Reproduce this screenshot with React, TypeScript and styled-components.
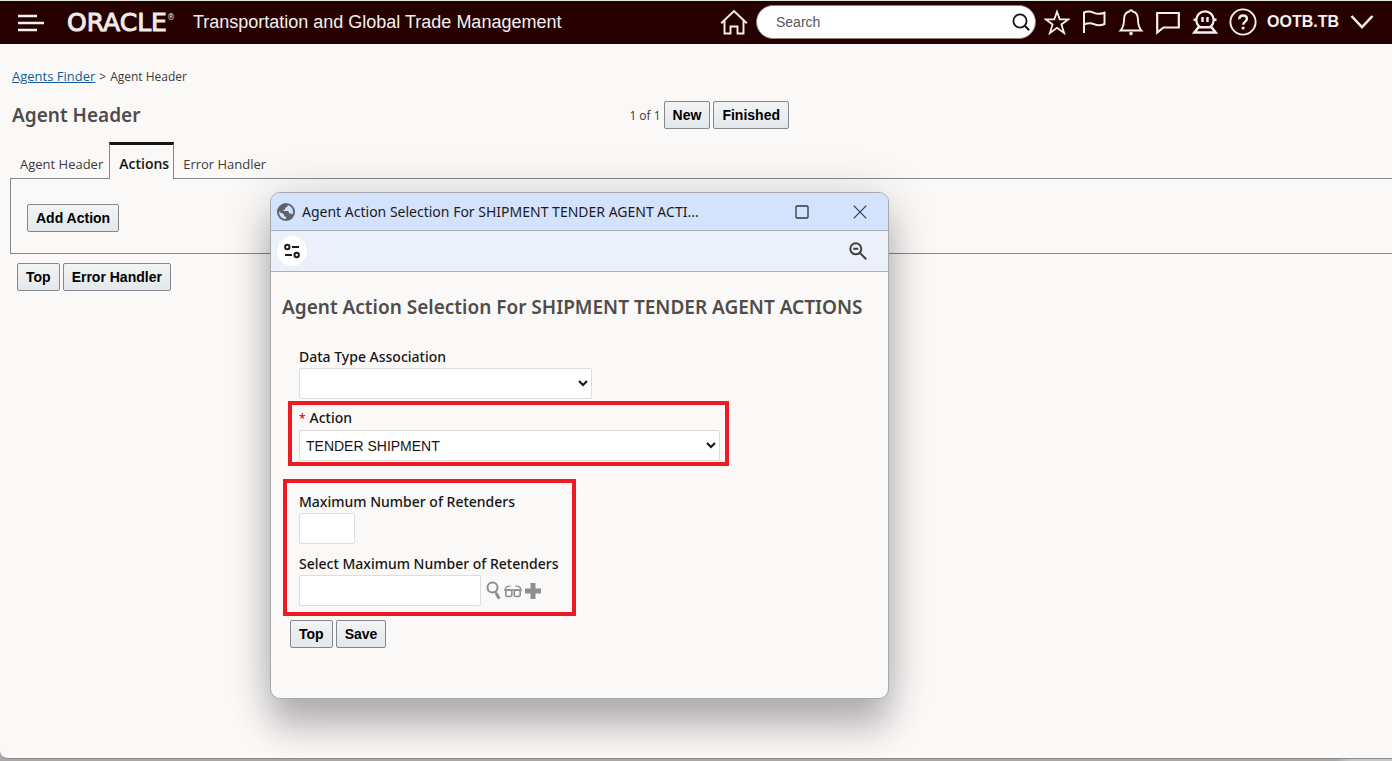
import React from "react";
import styled, { createGlobalStyle, css } from "styled-components";

const UI_FONT = `"Segoe UI", "Open Sans", "Noto Sans", sans-serif`;
const LABEL_FONT = `"Segoe UI", "Noto Sans", "Open Sans", sans-serif`;
const CONTROL_FONT = `Arial, "Liberation Sans", sans-serif`;

const GlobalStyle = createGlobalStyle`
  *, *::before, *::after { box-sizing: border-box; }
  body {
    margin: 0;
    background: #fbf9f8;
    color: #161513;
    font-family: ${UI_FONT};
    font-size: 13px;
  }
  h1, h2, p { margin: 0; }
`;

const Page = styled.div`
  position: relative;
  display: flex;
  flex-direction: column;
  min-height: 100vh;
  overflow: hidden;
  background: linear-gradient(to right, #a9a8a7 96%, #c8c7c7 97%);
`;

const Screen = styled.div`
  flex: 1;
  display: flex;
  flex-direction: column;
  margin-bottom: 2px;
  border-bottom: 1px solid #8f8e8d;
  border-bottom-left-radius: 8px;
  background: #fbf9f8;
  overflow: hidden;
`;

/* ---------- top bar ---------- */

const TopBar = styled.header`
  display: flex;
  align-items: center;
  justify-content: space-between;
  height: 44px;
  padding: 0 18px;
  border-top: 1px solid #dfe6da;
  background: #260000;
  color: #f5f1ee;
  font-family: ${CONTROL_FONT};
`;

const Brand = styled.div`
  display: flex;
  align-items: center;
`;

const Actions = styled.div`
  display: flex;
  align-items: center;
  gap: 8px;
  padding-bottom: 2px;
`;

const IconButton = styled.button`
  display: flex;
  align-items: center;
  justify-content: center;
  padding: 0;
  border: 0;
  background: none;
  color: inherit;
  cursor: pointer;
`;

const Logo = styled.span`
  display: flex;
  margin-left: 23px;
  color: #f0ebe8;
  font-family: "DejaVu Sans", sans-serif;
  font-size: 25px;
  line-height: 30px;
  -webkit-text-stroke: 1px currentColor;

  sup {
    font-size: 8px;
    line-height: 20px;
    -webkit-text-stroke: 0;
  }
`;

const AppName = styled.span`
  margin-left: 18px;
  font-size: 18px;
  white-space: nowrap;
`;

const SearchBox = styled.label`
  display: flex;
  align-items: center;
  width: 280px;
  height: 34px;
  padding: 0 5px 0 19px;
  border: 1px solid #8d8583;
  border-radius: 17px;
  background: #fff;
  color: #161513;
`;

const SearchInput = styled.input`
  flex: 1;
  min-width: 0;
  padding: 0;
  border: 0;
  outline: 0;
  background: none;
  font: 14px ${CONTROL_FONT};

  &::placeholder { color: #5a5654; opacity: 1; }
`;

const UserButton = styled(IconButton)`
  gap: 11px;
  font: bold 16px ${CONTROL_FONT};
`;

/* ---------- shared controls ---------- */

const Button = styled.button`
  height: 28px;
  padding: 0 8px;
  border: 1px solid #85888a;
  border-radius: 2px;
  background: linear-gradient(#f2f4f5, #e3e8ec);
  color: #000;
  font: bold 14px ${CONTROL_FONT};
  white-space: nowrap;
  cursor: pointer;
`;

const ButtonRow = styled.div<{ $inset: number; $top: number }>`
  display: flex;
  gap: 3px;
  padding: ${(p) => p.$top}px ${(p) => p.$inset}px 0;
`;

/* ---------- main page ---------- */

const Breadcrumb = styled.nav`
  display: flex;
  align-items: center;
  gap: 4px;
  height: 20px;
  margin: 22px 12px 0;
  font-size: 12px;
  color: #3b3937;

  a { color: #0f5c99; font-size: 13px; }
`;

const TitleRow = styled.div`
  display: grid;
  grid-template-columns: 45% auto;
  align-items: center;
  margin-top: 15px;
  padding: 0 8px 0 12px;
`;

const PageTitle = styled.h1`
  font-family: ${LABEL_FONT};
  font-size: 19px;
  line-height: 28px;
  font-weight: 600;
  color: #4f4c4a;
`;

const Pager = styled.div`
  display: flex;
  align-items: center;
  gap: 3px;
  font-size: 12px;
  color: #3b3937;
`;

const Tabs = styled.div`
  position: relative;
  z-index: 1;
  display: flex;
  height: 37px;
  margin: 13px 0 -1px 14px;
`;

const Tab = styled.button<{ $active?: boolean }>`
  padding: 7px 6px 0;
  border: 0;
  background: none;
  color: #3b3937;
  font: 13px ${UI_FONT};
  cursor: pointer;

  ${(p) =>
    p.$active &&
    css`
      margin-right: 3px;
      padding: 3px 4px 0 9px;
      border: 1px solid #85888a;
      border-top: 3px solid #161513;
      border-bottom: 0;
      background: #fbf9f8;
      color: #161513;
      font-size: 14px;
      font-weight: 600;
    `}
`;

const Panel = styled.section`
  margin-left: 10px;
  padding: 25px 16px 21px;
  border: 1px solid #85888a;
  border-right: 0;
`;

/* ---------- popup window ---------- */

const Popup = styled.section`
  position: absolute;
  top: 192px;
  left: 270px;
  width: 619px;
  border: 1px solid #a8a8a8;
  border-radius: 10px;
  background: #fbf9f8;
  box-shadow: 0 30px 34px rgba(0, 0, 0, 0.22), 0 4px 48px rgba(0, 0, 0, 0.18);
`;

const PopupBar = styled.div`
  display: flex;
  align-items: center;
  height: 38px;
  padding: 0 21px 0 6px;
  border-bottom: 1px solid #abb1ba;
  border-radius: 9px 9px 0 0;
  background: #d3e2fd;
  color: #33363b;
`;

const PopupCaption = styled.p`
  flex: 1;
  margin-left: 7px;
  font-family: ${LABEL_FONT};
  font-size: 14px;
  white-space: nowrap;
  color: #1c1c1e;
`;

const WindowButtons = styled.div`
  display: flex;
  gap: 44px;
`;

const PopupTools = styled.div`
  display: flex;
  align-items: center;
  justify-content: space-between;
  height: 41px;
  padding: 0 21px 0 6px;
  border-bottom: 1px solid #abb1ba;
  background: #ecf0fa;
  color: #3c4043;
`;

const RoundButton = styled(IconButton)`
  width: 30px;
  height: 30px;
  border-radius: 50%;
  background: #fff;
  color: #1c1c1e;
`;

const PopupBody = styled.form`
  padding: 20px 0 50px;
`;

const PopupTitle = styled.h2`
  margin-bottom: 24px;
  padding-left: 11px;
  font-family: ${LABEL_FONT};
  font-size: 19px;
  line-height: 30px;
  font-weight: 600;
  color: #4f4c4a;
  white-space: nowrap;
`;

const Field = styled.div<{ $indent: number }>`
  padding-left: ${(p) => p.$indent}px;
`;

const Label = styled.label`
  display: block;
  font-family: ${LABEL_FONT};
  font-size: 14px;
  line-height: 22px;
  font-weight: 500;
`;

const Required = styled.span`
  margin-right: 4px;
  color: #e00;
  font-size: 12px;
`;

const fieldBox = css`
  display: block;
  height: 31px;
  border: 1px solid #dfdddb;
  border-radius: 2px;
  background: #fff;
  color: #161513;
  font: 14px ${CONTROL_FONT};
`;

const Select = styled.select<{ $width: number }>`
  ${fieldBox}
  width: ${(p) => p.$width}px;
  padding: 0 2px;
`;

const TextInput = styled.input<{ $width: number }>`
  ${fieldBox}
  width: ${(p) => p.$width}px;
`;

const Highlight = styled.div<{ $left: number; $width: number }>`
  width: ${(p) => p.$width}px;
  margin: 2px 0 0 ${(p) => p.$left}px;
  padding: 2px 0 1px;
  border: 4px solid #ed1c24;
`;

const RetenderBox = styled(Highlight)`
  margin-top: 13px;
  padding: 8px 0 6px;
`;

const Spacer = styled.div`
  height: 9px;
`;

const LookupRow = styled.div`
  display: flex;
  align-items: center;
  color: #8c8f90;
`;

const LookupIcons = styled.div`
  display: flex;
  align-items: center;
  gap: 3px;
  margin-left: 5px;
`;

/* ---------- drawings ---------- */

type IconProps = { w: number; h?: number; sw?: number; children: React.ReactNode };

const Icon = ({ w, h = w, sw = 2, children }: IconProps) => (
  <svg width={w} height={h} viewBox={`0 0 ${w} ${h}`} fill="none" stroke="currentColor" strokeWidth={sw} aria-hidden="true">
    {children}
  </svg>
);

const MenuIcon = () => (
  <Icon w={26} h={18}><path d="M0 2h19M0 9h26M0 16h19" strokeWidth="2.4" /></Icon>
);
const HomeIcon = () => (
  <Icon w={28} h={26}><path d="M1.2 14.2 14 2l12.800 12.200M4.500 11.500V24.500h6V17.500h7v7h6V11.500" strokeWidth="1.900" /></Icon>
);
const SearchIcon = () => (
  <Icon w={18}><circle cx="8" cy="8" r="6.600" strokeWidth="1.800" /><path d="m12.800 12.800 4.400 4.400" /></Icon>
);
const StarIcon = () => (
  <Icon w={26} h={26} sw={1.800}><path d="m13 2.800 2.700 7.600h8.600l-6.900 5 2.700 8.600-7.100-5.200-7.100 5.200 2.700-8.600-6.900-5h8.600z" /></Icon>
);
const FlagIcon = () => (
  <Icon w={26} h={26}><path d="M3 24V3.500c4-1.800 7-1 10 .4s6 1.400 10.500-.2V15c-4 1.800-7.500 1.600-10.500.2S7 13.800 3 15.500" /></Icon>
);
const BellIcon = () => (
  <Icon w={26} h={28} sw={1.900}>
    <path d="M2.500 22.500c2.600-3 3.500-6 3.500-10.500 0-5 2.500-8 5.300-8.500a1.800 1.800 0 0 1 3.400 0C17.500 4 20 7 20 12c0 4.500.9 7.500 3.500 10.500z" />
    <circle cx="13" cy="25.600" r="1.800" fill="currentColor" stroke="none" />
  </Icon>
);
const ChatIcon = () => (
  <Icon w={26} h={26} sw={2.200}><path d="M2.200 4h21.600v14.500H8.500L2.200 23.500z" /></Icon>
);
const BotIcon = () => (
  <Icon w={26} h={26}>
    <circle cx="13" cy="11" r="8.700" strokeWidth="2.200" />
    <path d="M10.500 8v5M15.500 8v5M1.500 10.800h3M21.500 10.800h3" strokeWidth="2.400" />
    <path d="M6.500 18.300h13l4 5.200h-21z" fill="#260000" strokeWidth="2.600" />
  </Icon>
);
const HelpIcon = () => (
  <Icon w={28}>
    <circle cx="14" cy="14" r="12.600" strokeWidth="1.900" />
    <path d="M10.200 11.200c.1-2.500 1.700-3.700 3.900-3.700s3.800 1.300 3.800 3.300c0 2.800-3.700 2.800-3.700 6" strokeWidth="2.400" />
    <circle cx="14.100" cy="20" r="1.600" fill="currentColor" stroke="none" />
  </Icon>
);
const ChevronIcon = () => (
  <Icon w={24} h={16}><path d="M1.500 2 12 13.200 22.500 2" strokeWidth="2.500" /></Icon>
);
const GlobeIcon = () => (
  <Icon w={18}>
    <circle cx="9" cy="9" r="9" fill="#5f6368" stroke="none" />
    <path d="M10.800 2.100c-.2 1.300-.5 1.900-1.700 2.200-.8.200-.9.600-.9 1.500 0 .7-.4 1-1.200 1-.7 0-.8.600-.3 1.200h3.700c1 0 1.500.7 1.500 1.600 0 .8.400 1 1.300 1 1.100 0 1.600.2 2.300 1.100.3-.8.500-1.700.5-2.700 0-3.200-2.100-6-5.200-6.900zM2.100 8c.6 1.300 1.500 2 2.900 2.200 1.300.2 2 .8 2 2 0 .9.300 1.300 1.200 1.300.6 0 .9.300.9.900v1.600C5.300 16.200 1.500 13 2.100 8z" fill="#d3e2fd" stroke="none" />
  </Icon>
);
const MaximizeIcon = () => (
  <Icon w={14} sw={1.300}><rect x="1" y="1" width="12" height="12" rx="1" /></Icon>
);
const CloseIcon = () => (
  <Icon w={14} sw={1.100}><path d="m.700.700 12.600 12.600M13.300.700.700 13.300" /></Icon>
);
const TuneIcon = () => (
  <Icon w={16}>
    <circle cx="3.300" cy="4" r="2.200" /><path d="M8 4h7M1 12h7" /><circle cx="12.700" cy="12" r="2.200" />
  </Icon>
);
const ZoomOutIcon = () => (
  <Icon w={18}><circle cx="6.800" cy="6.800" r="5.500" /><path d="m11 11 6.200 6.200M4.300 6.800h5" /></Icon>
);
const LookupIcon = () => (
  <Icon w={15} h={19}>
    <circle cx="6.500" cy="6.500" r="5" /><path d="m10 12 3.300 5.800" strokeWidth="3" /><path d="m9 10 1 2" />
  </Icon>
);
const GlassesIcon = () => (
  <Icon w={18} h={14} sw={1.600}>
    <rect x="1.800" y="6" width="6" height="6.500" rx="2" /><rect x="10.200" y="6" width="6" height="6.500" rx="2" />
    <path d="M0 6h18M1.200 5c.6-2 2.200-3 5.300-2.800M16.800 5c-.6-2-2.200-3-5.300-2.800" strokeWidth="1.300" />
  </Icon>
);
const PlusIcon = () => (
  <Icon w={16}><path d="M8 0v16M0 8h16" strokeWidth="5" /></Icon>
);

const NAV_ICONS = [
  { name: "Favorites", Glyph: StarIcon },
  { name: "Flags", Glyph: FlagIcon },
  { name: "Notifications", Glyph: BellIcon },
  { name: "Messages", Glyph: ChatIcon },
  { name: "Assistant", Glyph: BotIcon },
  { name: "Help", Glyph: HelpIcon },
];

const LOOKUPS = [
  { name: "Find", Glyph: LookupIcon },
  { name: "View", Glyph: GlassesIcon },
  { name: "Add", Glyph: PlusIcon },
];

const NavIcons = styled.div`
  display: flex;
  align-items: center;
  gap: 11px;
  margin-right: 2px;
`;

function ActionPopup() {
  return (
    <Popup role="dialog" aria-labelledby="popup-title">
      <PopupBar>
        <GlobeIcon />
        <PopupCaption>Agent Action Selection For SHIPMENT TENDER AGENT ACTI...</PopupCaption>
        <WindowButtons>
          <IconButton aria-label="Maximize"><MaximizeIcon /></IconButton>
          <IconButton aria-label="Close"><CloseIcon /></IconButton>
        </WindowButtons>
      </PopupBar>
      <PopupTools>
        <RoundButton aria-label="Site settings"><TuneIcon /></RoundButton>
        <IconButton aria-label="Zoom out"><ZoomOutIcon /></IconButton>
      </PopupTools>
      <PopupBody onSubmit={(e) => e.preventDefault()}>
        <PopupTitle id="popup-title">Agent Action Selection For SHIPMENT TENDER AGENT ACTIONS</PopupTitle>
        <Field $indent={28}>
          <Label htmlFor="data-type">Data Type Association</Label>
          <Select id="data-type" $width={293} />
        </Field>
        <Highlight $left={17} $width={441}>
          <Field $indent={7}>
            <Label htmlFor="action"><Required>*</Required>Action</Label>
            <Select id="action" $width={421} defaultValue="tender">
              <option value="tender">TENDER SHIPMENT</option>
            </Select>
          </Field>
        </Highlight>
        <RetenderBox $left={12} $width={293}>
          <Field $indent={12}>
            <Label htmlFor="max-retenders">Maximum Number of Retenders</Label>
            <TextInput id="max-retenders" $width={56} />
            <Spacer />
            <Label htmlFor="select-retenders">Select Maximum Number of Retenders</Label>
            <LookupRow>
              <TextInput id="select-retenders" $width={182} />
              <LookupIcons>
                {LOOKUPS.map(({ name, Glyph }) => (
                  <IconButton key={name} type="button" aria-label={name}><Glyph /></IconButton>
                ))}
              </LookupIcons>
            </LookupRow>
          </Field>
        </RetenderBox>
        <ButtonRow $inset={19} $top={4}>
          <Button type="button">Top</Button>
          <Button type="submit">Save</Button>
        </ButtonRow>
      </PopupBody>
    </Popup>
  );
}

export default function App() {
  return (
    <Page>
      <GlobalStyle />
      <Screen>
        <TopBar>
          <Brand>
            <IconButton aria-label="Menu"><MenuIcon /></IconButton>
            <Logo>ORACLE<sup>®</sup></Logo>
            <AppName>Transportation and Global Trade Management</AppName>
          </Brand>
          <Actions>
            <IconButton aria-label="Home"><HomeIcon /></IconButton>
            <SearchBox>
              <SearchInput type="text" placeholder="Search" aria-label="Search" />
              <SearchIcon />
            </SearchBox>
            <NavIcons>
              {NAV_ICONS.map(({ name, Glyph }) => (
                <IconButton key={name} aria-label={name}><Glyph /></IconButton>
              ))}
            </NavIcons>
            <UserButton>OOTB.TB<ChevronIcon /></UserButton>
          </Actions>
        </TopBar>
        <main>
          <Breadcrumb aria-label="Breadcrumb">
            <a href="#finder">Agents Finder</a>
            <span>&gt;</span>
            <span>Agent Header</span>
          </Breadcrumb>
          <TitleRow>
            <PageTitle>Agent Header</PageTitle>
            <Pager>
              <span>1 of 1</span>
              <Button>New</Button>
              <Button>Finished</Button>
            </Pager>
          </TitleRow>
          <Tabs role="tablist">
            <Tab role="tab">Agent Header</Tab>
            <Tab role="tab" aria-selected="true" $active>Actions</Tab>
            <Tab role="tab">Error Handler</Tab>
          </Tabs>
          <Panel>
            <Button>Add Action</Button>
          </Panel>
          <ButtonRow $inset={17} $top={9}>
            <Button>Top</Button>
            <Button>Error Handler</Button>
          </ButtonRow>
        </main>
      </Screen>
      <ActionPopup />
    </Page>
  );
}
